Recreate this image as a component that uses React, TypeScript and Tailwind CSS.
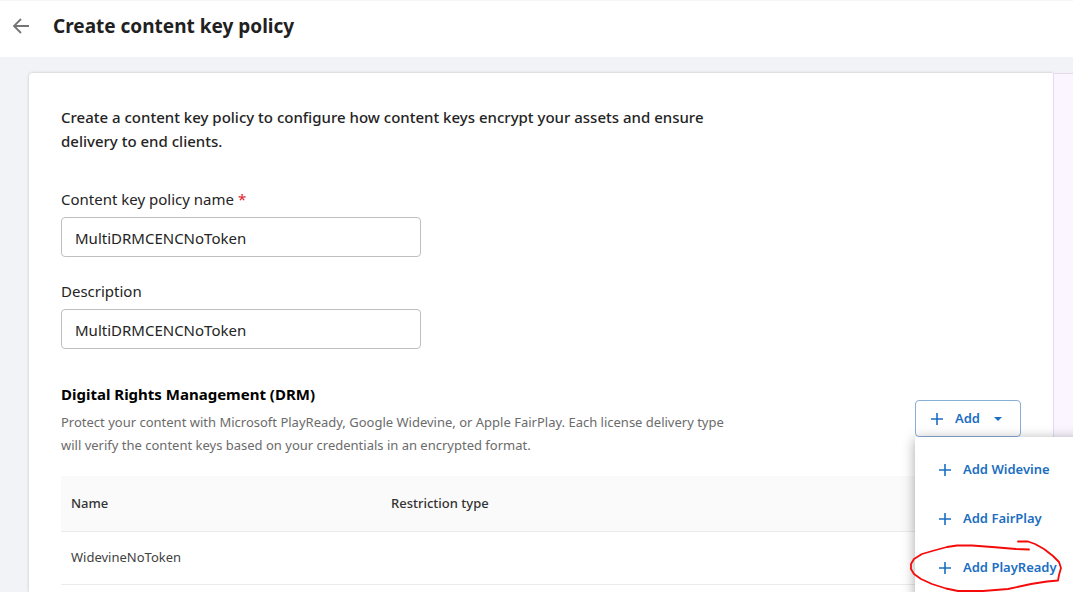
import { useState } from "react";

const menuItems = ["Add Widevine", "Add FairPlay", "Add PlayReady"];

const drmRows = [{ name: "WidevineNoToken", restriction: "" }];

function PlusIcon() {
  return (
    <svg viewBox="0 0 12 12" className="w-3 h-3 shrink-0" fill="none" stroke="currentColor" strokeWidth="1.6" aria-hidden="true">
      <path d="M6 0v12M0 6h12" />
    </svg>
  );
}

// Hand-drawn red ring around the last menu entry
function Highlight() {
  return (
    <svg
      viewBox="0 0 153 52"
      className="absolute -left-[5px] -top-[3px] w-[153px] h-[52px] pointer-events-none"
      fill="none"
      stroke="#f50a0a"
      strokeWidth="1.8"
      strokeLinecap="round"
      strokeLinejoin="round"
      aria-hidden="true"
    >
      <path d="M119 9.500 L106 9 L82 7 L62 5.500 L47 5.500 L37 7 L24 10.500 L12 14 L4 19 L1 24 L1 29 L4 34 L11 39 L22 44 L36 48.500 L48 51 L73 51 L98 49 L121 44 L137 41.500 L148 40.500 L149 35 L151 28 L149 22 L143 16 L134 9 L125 4 L118 1.500 L108 1.500" />
    </svg>
  );
}

function TextField({ id, label, required, value, onChange }: {
  id: string;
  label: string;
  required?: boolean;
  value: string;
  onChange: (value: string) => void;
}) {
  return (
    <div>
      <label htmlFor={id} className="block text-[15px] leading-6 text-[#242424]">
        {label} {required && <span className="text-[#e8202a]">*</span>}
      </label>
      <input
        id={id}
        type="text"
        value={value}
        onChange={(e) => onChange(e.target.value)}
        className="block mt-1.5 w-[360px] max-w-full h-10 px-[13px] pt-0.5 border border-[#bfbfbf] rounded text-[15px] text-[#242424] bg-white"
      />
    </div>
  );
}

export default function App() {
  const [policyName, setPolicyName] = useState("MultiDRMCENCNoToken");
  const [description, setDescription] = useState("MultiDRMCENCNoToken");
  const [menuOpen, setMenuOpen] = useState(true);

  return (
    <div className="flex flex-col h-screen overflow-hidden bg-[#f2f3f7] font-['Noto_Sans','Open_Sans',sans-serif] text-[#242424]">
      <header className="flex items-center gap-6 h-[57px] pl-3 pb-1.5 shrink-0 bg-white border-t border-[#f5f5f5]">
        <button type="button" aria-label="Back" className="text-[#757575]">
          <svg viewBox="0 0 17 16" className="w-[17px] h-4" fill="none" stroke="currentColor" strokeWidth="1.8">
            <path d="M17 8H2M9 1L2 8l7 7" />
          </svg>
        </button>
        <h1 className="text-[19px] leading-7 font-bold text-[#212121]">Create content key policy</h1>
      </header>

      <div className="flex flex-1 pt-4 pl-[29px] min-h-0">
        <main className="flex-1 min-w-0 px-8 pt-8 bg-white rounded-tl shadow-[0_0_3px_rgba(0,0,0,0.22)]">
          <p className="max-w-[680px] text-[15px] leading-6 font-medium">
            Create a content key policy to configure how content keys encrypt your assets and ensure delivery to end clients.
          </p>

          <div className="flex flex-col gap-[22px] mt-[34px]">
            <TextField id="policy-name" label="Content key policy name" required value={policyName} onChange={setPolicyName} />
            <TextField id="description" label="Description" value={description} onChange={setDescription} />
          </div>

          <section className="mt-[33px]">
            <div className="flex items-end justify-between">
              <div className="max-w-[680px]">
                <h2 className="text-[15px] leading-6 font-bold text-black">Digital Rights Management (DRM)</h2>
                <p className="mt-[5px] text-[13px] leading-[23px] text-[#6b6b6b]">
                  Protect your content with Microsoft PlayReady, Google Widevine, or Apple FairPlay. Each license delivery type will verify the content keys based on your credentials in an encrypted format.
                </p>
              </div>

              <div className="relative mb-5 shrink-0">
                <button
                  type="button"
                  aria-expanded={menuOpen}
                  onClick={() => setMenuOpen(!menuOpen)}
                  className="flex items-center gap-3 w-[106px] h-[37px] px-[15px] border border-[#86b0d8] rounded text-[13px] font-semibold text-[#1b6ec2]"
                >
                  <PlusIcon />
                  Add
                  <svg viewBox="0 0 8 4" className="w-2 h-1 ml-0.5" fill="currentColor" aria-hidden="true">
                    <path d="M0 0h8L4 4z" />
                  </svg>
                </button>
                {menuOpen && (
                  <ul className="absolute left-0 top-full z-10 w-[200px] pt-2 pb-2 bg-white shadow-[0_2px_12px_rgba(0,0,0,0.35)]">
                    {menuItems.map((item) => (
                      <li key={item} className="relative">
                        <button
                          type="button"
                          className="flex items-center gap-3 w-full h-[49px] px-6 text-[13px] font-semibold text-[#1b6ec2] whitespace-nowrap"
                        >
                          <PlusIcon />
                          {item}
                        </button>
                        {item === "Add PlayReady" && <Highlight />}
                      </li>
                    ))}
                  </ul>
                )}
              </div>
            </div>

            <table className="w-full mt-[19px] table-fixed text-left text-[13px]">
              <thead>
                <tr className="h-[55px] bg-[#fafafa] border-b border-[#ebebeb]">
                  <th className="w-80 px-2.5 font-medium text-[#333333]">Name</th>
                  <th className="px-2.5 font-medium text-[#333333]">Restriction type</th>
                </tr>
              </thead>
              <tbody>
                {drmRows.map((row) => (
                  <tr key={row.name} className="h-[53px] border-b border-[#ebebeb]">
                    <td className="px-2.5 text-[#424242]">{row.name}</td>
                    <td className="px-2.5 text-[#424242]">{row.restriction}</td>
                  </tr>
                ))}
              </tbody>
            </table>
          </section>
        </main>
        <aside className="w-5 shrink-0 bg-[#faf5ff] border-t border-l border-[#e6daee]" />
      </div>
    </div>
  );
}
